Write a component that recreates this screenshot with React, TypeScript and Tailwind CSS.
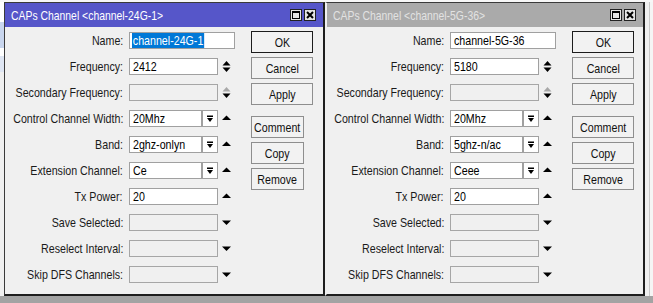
import React from "react";

type Kind = "text" | "updown" | "updownDis" | "drop" | "tx" | "down";

interface Row {
  label: string;
  value?: string;
  kind: Kind;
  full?: boolean;
  selected?: boolean;
  disabled?: boolean;
}

const UpDown = ({ top }: { top: string }) => (
  <svg width="9" height="13" viewBox="0 0 9 13">
    <path d="M0.5 5.5 L4.5 1 L8.5 5.5 Z" fill={top} />
    <path d="M0.5 7.5 L8.5 7.5 L4.5 12 Z" fill="#000" />
  </svg>
);

const Up = () => (
  <svg width="9" height="6" viewBox="0 0 9 6" className="-mt-[2px]">
    <path d="M0 5 L4.5 0.5 L9 5 Z" fill="#000" />
  </svg>
);

const Down = () => (
  <svg width="9" height="6" viewBox="0 0 9 6">
    <path d="M0 0.5 L9 0.5 L4.5 5 Z" fill="#000" />
  </svg>
);

const DropGlyph = () => (
  <svg width="8" height="8" viewBox="0 0 8 8">
    <rect x="1" y="0.5" width="6" height="1.5" fill="#000" />
    <path d="M1 3 L7 3 L4 7 Z" fill="#000" />
  </svg>
);

function FormRow({ row, labelW }: { row: Row; labelW: number }) {
  const disabled = row.disabled;
  const inputCls = disabled
    ? "h-[17px] border border-[#a6a6a6] bg-[#f0f0f0]"
    : "h-[17px] border border-[#a0a0a0] bg-white";
  let field: React.ReactNode;
  if (row.kind === "drop") {
    field = (
      <div className="flex">
        <div className={`${inputCls} w-[73px] flex items-center pl-[3px] overflow-hidden`}>
          <span className="inline-block whitespace-nowrap leading-none scale-x-[0.82] origin-left">
            {row.value}
          </span>
        </div>
        <div className="h-[17px] w-[16px] border border-[#a0a0a0] bg-white flex items-center justify-center">
          <DropGlyph />
        </div>
      </div>
    );
  } else {
    field = (
      <div
        className={`${inputCls} ${row.full ? "w-[106px]" : "w-[89px]"} flex items-center pl-[3px] overflow-hidden`}
      >
        {row.selected ? (
          <span className="inline-block whitespace-nowrap leading-none bg-[#0078d7] text-white px-[1px] -ml-[1px] py-[1px] scale-x-[0.82] origin-left">
            {row.value}
          </span>
        ) : (
          <span className="inline-block whitespace-nowrap leading-none scale-x-[0.82] origin-left">
            {row.value}
          </span>
        )}
      </div>
    );
  }
  let icon: React.ReactNode = null;
  if (row.kind === "updown") icon = <UpDown top="#000" />;
  if (row.kind === "updownDis") icon = <UpDown top="#a8a8a8" />;
  if (row.kind === "drop" || row.kind === "tx") icon = <Up />;
  if (row.kind === "down") icon = <Down />;
  return (
    <div className="flex items-center h-[17px]">
      <div
        className="flex justify-end leading-none text-[#1a1a1a] shrink-0 whitespace-nowrap"
        style={{ width: labelW }}
      >
        <span className="inline-block shrink-0 scale-x-[0.82] origin-right">{row.label}</span>
      </div>
      <div className="ml-[6px]">{field}</div>
      {!row.full && (
        <div className="w-[17px] flex items-center justify-center">{icon}</div>
      )}
    </div>
  );
}

function Btn({ label, w, def }: { label: string; w: number; def?: boolean }) {
  return (
    <div
      className={`h-[22px] flex items-center justify-center bg-[#f2f2f2] leading-none text-[#111] border ${
        def ? "border-[#1c1c1c]" : "border-[#8e8e8e]"
      }`}
      style={{ width: w }}
    >
      <span className="inline-block whitespace-nowrap scale-x-[0.82] origin-center">{label}</span>
    </div>
  );
}

function Win({
  title,
  active,
  rows,
  labelW,
  lowerBtnW,
  widthCls,
  leftCls,
}: {
  title: string;
  active: boolean;
  rows: Row[];
  labelW: number;
  lowerBtnW: number;
  widthCls: string;
  leftCls: string;
}) {
  return (
    <div
      className={`${widthCls} ${leftCls} h-[294px] border-t border-t-[#3a3a3a] border-r-2 border-r-[#1e1e1e] border-b-2 border-b-[#1e1e1e] bg-[#f0f0f0] flex flex-col shrink-0`}
    >
      <div
        className={`h-[24px] flex items-center justify-between pl-[6px] pr-[7px] ${
          active ? "bg-[#5656c9] text-white" : "bg-[#aaaaaa] text-[#e2e2e2]"
        }`}
      >
        <span className="inline-block whitespace-nowrap text-[13px] leading-none scale-x-[0.8] origin-left">
          {title}
        </span>
        <div className="flex gap-[2px]">
          <div className="w-[12px] h-[12px] border border-[#222] bg-[#e4e4e4] flex items-center justify-center">
            <div className="w-[8px] h-[8px] border border-[#000] border-t-2" />
          </div>
          <div className="w-[12px] h-[12px] border border-[#222] bg-[#e4e4e4] flex items-center justify-center">
            <svg width="8" height="8" viewBox="0 0 8 8">
              <path d="M1 1 L7 7 M7 1 L1 7" stroke="#000" strokeWidth="2" />
            </svg>
          </div>
        </div>
      </div>
      <div className="flex">
        <div className="flex flex-col gap-[9px] pt-[5px]">
          {rows.map((r) => (
            <FormRow key={r.label} row={r} labelW={labelW} />
          ))}
        </div>
        <div className="flex flex-col pt-[4px] ml-[16px]">
          <Btn label="OK" w={62} def />
          <div className="mt-[4px]">
            <Btn label="Cancel" w={62} />
          </div>
          <div className="mt-[4px]">
            <Btn label="Apply" w={62} />
          </div>
          <div className="mt-[11px]">
            <Btn label="Comment" w={lowerBtnW} />
          </div>
          <div className="mt-[4px]">
            <Btn label="Copy" w={lowerBtnW} />
          </div>
          <div className="mt-[4px]">
            <Btn label="Remove" w={lowerBtnW} />
          </div>
        </div>
      </div>
    </div>
  );
}

const makeRows = (name: string, freq: string, band: string, ext: string, selected: boolean): Row[] => [
  { label: "Name:", value: name, kind: "text", full: true, selected },
  { label: "Frequency:", value: freq, kind: "updown" },
  { label: "Secondary Frequency:", value: "", kind: "updownDis", disabled: true },
  { label: "Control Channel Width:", value: "20Mhz", kind: "drop" },
  { label: "Band:", value: band, kind: "drop" },
  { label: "Extension Channel:", value: ext, kind: "drop" },
  { label: "Tx Power:", value: "20", kind: "tx" },
  { label: "Save Selected:", value: "", kind: "down", disabled: true },
  { label: "Reselect Interval:", value: "", kind: "down", disabled: true },
  { label: "Skip DFS Channels:", value: "", kind: "down", disabled: true },
];

export default function App() {
  return (
    <div className="w-[653px] h-[303px] overflow-hidden flex flex-col bg-[#f4f4f4] font-['Liberation_Sans',Arial,sans-serif] text-[13px]">
      <div className="flex h-[296px] pt-[2px] bg-[#f7f7f7]">
        <div className="w-[4px] shrink-0 flex flex-col">
          <div className="h-[20px] bg-white" />
          <div className="h-[26px] bg-[#c9d6ee]" />
          <div className="h-[8px] bg-white" />
          <div className="h-[16px] bg-[#dfe6f3]" />
          <div className="flex-1 bg-[#f0f0f0]" />
        </div>
        <Win
          title="CAPs Channel <channel-24G-1>"
          active
          rows={makeRows("channel-24G-1", "2412", "2ghz-onlyn", "Ce", true)}
          labelW={118}
          lowerBtnW={53}
          widthCls="w-[321px]"
          leftCls="border-l border-l-[#3a3a3a]"
        />
        <Win
          title="CAPs Channel <channel-5G-36>"
          active={false}
          rows={makeRows("channel-5G-36", "5180", "5ghz-n/ac", "Ceee", false)}
          labelW={117}
          lowerBtnW={62}
          widthCls="w-[320px]"
          leftCls="border-l-2 border-l-[#f0f0f0]"
        />
        <div className="flex-1 flex">
          <div className="w-[4px] bg-[#f0f0f0]" />
          <div className="w-[1px] bg-[#c8c8c8]" />
          <div className="flex-1 bg-[#f5f5f5]" />
        </div>
      </div>
      <div className="flex-1 bg-[#a3a3a3]" />
    </div>
  );
}
